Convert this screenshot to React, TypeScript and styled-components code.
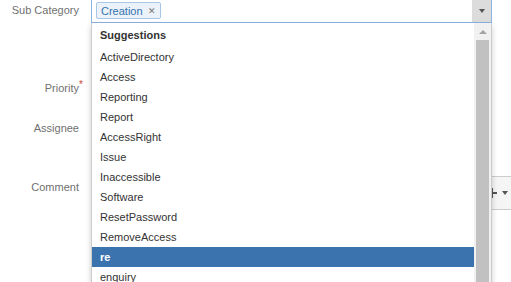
import React from 'react'
import styled, { createGlobalStyle } from 'styled-components'

const GlobalStyle = createGlobalStyle`
  html, body { margin: 0; padding: 0; background: #fff; }
  body {
    font-family: "Liberation Sans", Arial, sans-serif;
    font-size: 11px;
    color: #333;
    overflow: hidden;
  }
`

const Page = styled.div`
  position: relative;
  width: 511px;
  height: 282px;
  overflow: hidden;
`

const Form = styled.div`
  display: flex;
  flex-direction: column;
  margin-top: -1px;
`

const Row = styled.div<{ $height: number }>`
  display: grid;
  grid-template-columns: 80px 1fr;
  column-gap: 11px;
  height: ${p => p.$height}px;
`

const Label = styled.label<{ $pad: number; $required?: boolean }>`
  position: relative;
  display: block;
  text-align: right;
  color: #707070;
  line-height: 14px;
  padding-top: ${p => p.$pad}px;
  padding-right: 1px;

  ${p => p.$required && `
    &::after {
      content: '*';
      position: absolute;
      right: -3px;
      top: ${p.$pad - 3}px;
      color: #d04437;
      font-size: 10px;
    }
  `}
`

const TagInput = styled.div`
  display: flex;
  align-items: flex-start;
  box-sizing: border-box;
  width: 401px;
  height: 24px;
  border: 1px solid #8cb4e2;
  background: #fff;
`

const Tag = styled.span`
  display: inline-flex;
  align-items: center;
  gap: 5px;
  box-sizing: border-box;
  height: 17px;
  margin: 2px 0 0 4px;
  padding: 0 4px 0 4px;
  border: 1px solid #a8c6e6;
  border-radius: 2px;
  background: #ebf2f9;
  color: #3572b0;
  font-size: 11px;
`

const TagRemove = styled.span`
  color: #777;
  font-size: 9px;
`

const DropButton = styled.div`
  margin-left: auto;
  width: 19px;
  height: 22px;
  background: #dcdcdc;
  display: flex;
  align-items: center;
  justify-content: center;
`

const Caret = styled.span<{ $color: string }>`
  width: 0;
  height: 0;
  border-left: 3.5px solid transparent;
  border-right: 3.5px solid transparent;
  border-top: 4px solid ${p => p.$color};
`

const UpArrow = styled.span`
  width: 0;
  height: 0;
  border-left: 4px solid transparent;
  border-right: 4px solid transparent;
  border-bottom: 4px solid #a3a3a3;
`

const Select = styled.div`
  box-sizing: border-box;
  width: 250px;
  height: 24px;
  border: 1px solid #ccc;
`

const Editor = styled.div`
  width: 430px;
  box-sizing: border-box;
  border: 1px solid #ccc;
  border-left-color: #ccc;
`

const Toolbar = styled.div`
  display: flex;
  align-items: center;
  justify-content: flex-end;
  height: 32px;
  padding-right: 8px;
  background: #f5f5f5;
  border-bottom: 1px solid #ccc;
`

const ToolButton = styled.div`
  display: flex;
  align-items: center;
  gap: 5px;
  padding: 0 4px;
  height: 26px;
`

const Dropdown = styled.div`
  position: absolute;
  top: 23px;
  left: 91px;
  width: 401px;
  height: 280px;
  box-sizing: border-box;
  display: flex;
  background: #fff;
  border: 1px solid #ccc;
  border-top: none;
  box-shadow: 0 3px 6px rgba(0, 0, 0, 0.2);
`

const List = styled.ul`
  flex: 1;
  margin: 0;
  padding: 0;
  list-style: none;
`

const Heading = styled.li`
  height: 24px;
  line-height: 25px;
  padding-left: 8px;
  font-weight: bold;
  color: #333;
`

const Item = styled.li<{ $active?: boolean }>`
  height: 20px;
  line-height: 20px;
  padding-left: 8px;
  background: ${p => (p.$active ? '#3b73af' : 'transparent')};
  color: ${p => (p.$active ? '#fff' : '#333')};
  font-weight: ${p => (p.$active ? 'bold' : 'normal')};
`

const Scrollbar = styled.div`
  width: 17px;
  background: #f1f1f1;
  display: flex;
  flex-direction: column;
  align-items: center;
`

const ScrollArrow = styled.div`
  height: 17px;
  display: flex;
  align-items: center;
  justify-content: center;
`

const Thumb = styled.div`
  width: 13px;
  flex: 1;
  background: #c1c1c1;
`

const suggestions = [
  'ActiveDirectory',
  'Access',
  'Reporting',
  'Report',
  'AccessRight',
  'Issue',
  'Inaccessible',
  'Software',
  'ResetPassword',
  'RemoveAccess',
  're',
  'enquiry',
]

export default function App() {
  return (
    <Page>
      <GlobalStyle />
      <Form>
        <Row $height={77}>
          <Label $pad={4}>Sub Category</Label>
          <TagInput>
            <Tag>
              Creation <TagRemove>✕</TagRemove>
            </Tag>
            <DropButton>
              <Caret $color="#555" />
            </DropButton>
          </TagInput>
        </Row>
        <Row $height={40}>
          <Label $pad={5} $required>Priority</Label>
          <Select />
        </Row>
        <Row $height={60}>
          <Label $pad={5}>Assignee</Label>
          <Select />
        </Row>
        <Row $height={110}>
          <Label $pad={4}>Comment</Label>
          <Editor>
            <Toolbar>
              <ToolButton>
                <svg width="10" height="10" viewBox="0 0 10 10">
                  <path d="M5 0v10M0 5h10" stroke="#555" strokeWidth="2" />
                </svg>
                <Caret $color="#555" />
              </ToolButton>
            </Toolbar>
          </Editor>
        </Row>
      </Form>
      <Dropdown>
        <List>
          <Heading>Suggestions</Heading>
          {suggestions.map(s => (
            <Item key={s} $active={s === 're'}>
              {s}
            </Item>
          ))}
        </List>
        <Scrollbar>
          <ScrollArrow>
            <UpArrow />
          </ScrollArrow>
          <Thumb />
        </Scrollbar>
      </Dropdown>
    </Page>
  )
}
